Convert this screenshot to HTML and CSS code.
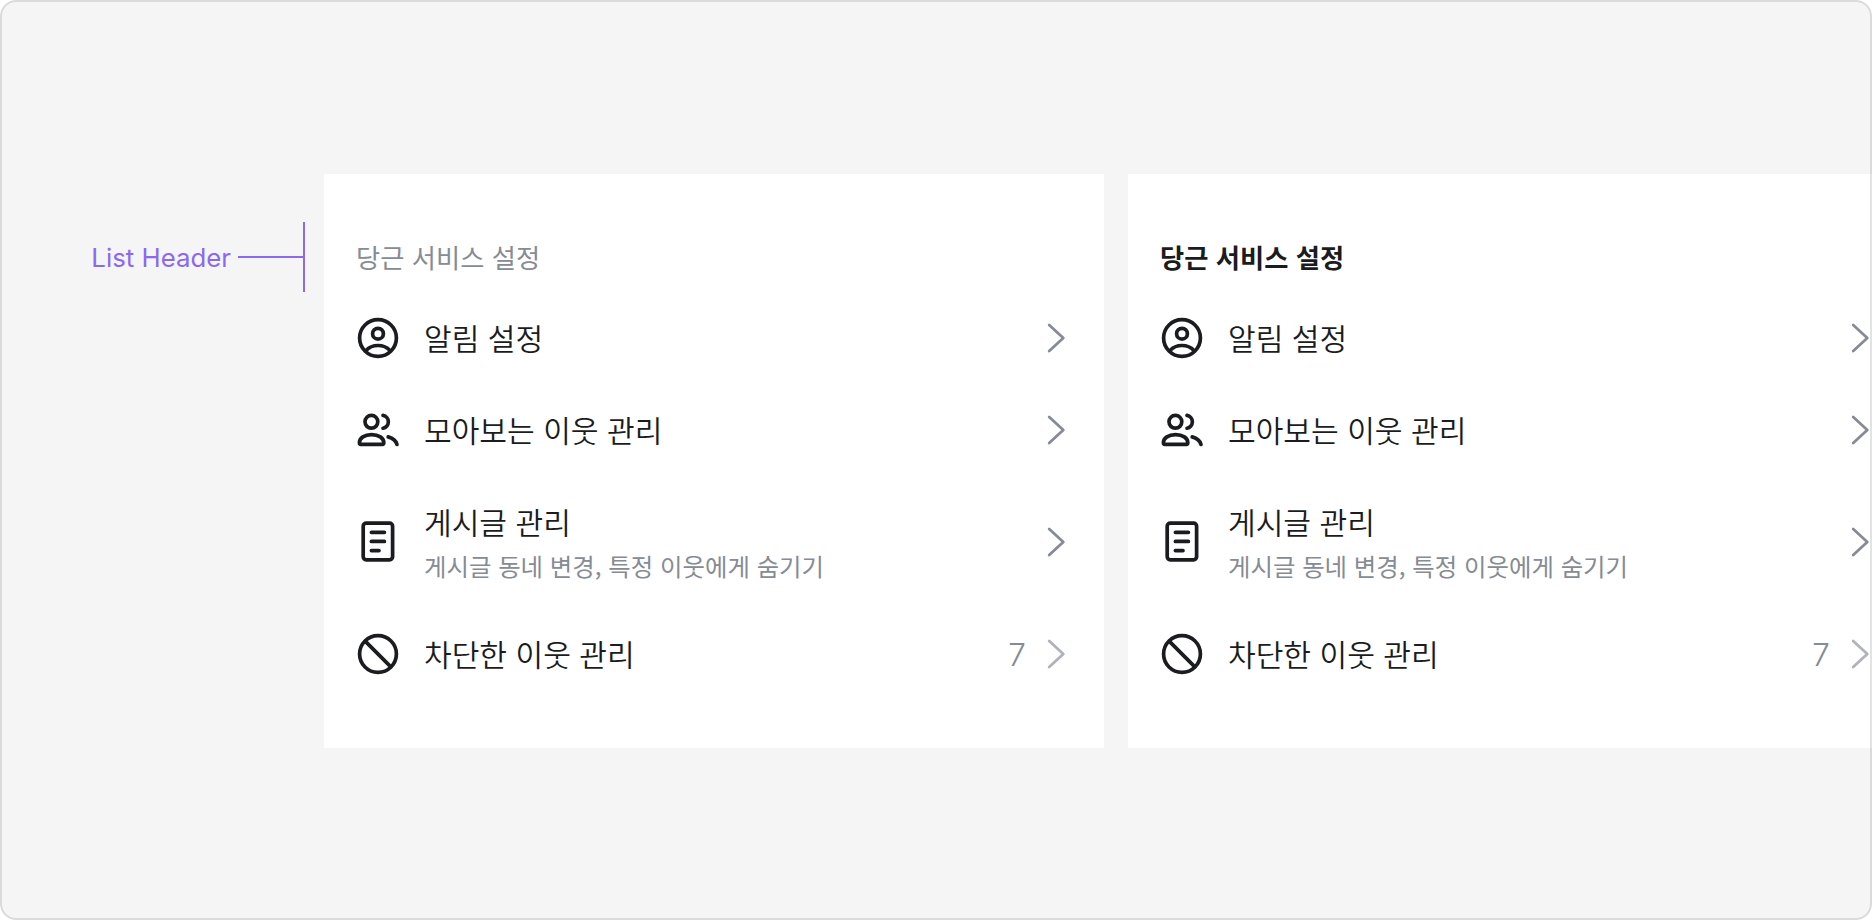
FILE: index.html
```
<!DOCTYPE html>
<html lang="ko">

<head>
  <meta charset="UTF-8">
  <meta name="viewport" content="width=device-width, initial-scale=1.0">
  <title>List Header</title>
  <link rel="stylesheet" href="styles.css">
</head>

<body>

  <!-- shared icons -->
  <svg class="sprite">
    <symbol id="icon-profile" viewBox="0 0 44 44">
      <circle cx="22" cy="22" r="18.4" />
      <circle cx="22" cy="17.7" r="5.4" />
      <path d="M10.2 34.4C13 31.2 17.2 29.5 22 29.5s9 1.7 11.8 4.9" />
    </symbol>
    <symbol id="icon-group" viewBox="0 0 44 44">
      <circle cx="15.4" cy="13.8" r="6.4" />
      <path d="M3.4 34.8C3.4 30 8.6 26.6 15.6 26.6S27.8 30 27.8 34.8q0 1.6-1.4 1.6H4.8q-1.4 0-1.4-1.6z" />
      <path d="M27 7.4a6.5 6.5 0 0 1 0 12.8M32.2 28.9c4.8 1.4 7.8 3.8 8.8 7.5" />
    </symbol>
    <symbol id="icon-article" viewBox="0 0 44 44">
      <rect x="7.2" y="3.2" width="29.4" height="36.6" rx="3" />
      <path d="M15.4 12.3h13M15.4 21.4h13M15.4 30.6h7.6" />
    </symbol>
    <symbol id="icon-block" viewBox="0 0 44 44">
      <circle cx="22" cy="22" r="18.4" />
      <path d="M9.4 9.4l25.2 25.2" />
    </symbol>
    <symbol id="icon-chevron" viewBox="0 0 36 36">
      <path d="M13.2 5L27.3 18 13.2 31" />
    </symbol>
  </svg>

  <div class="frame">
    <div class="annotation">
      <span class="annotation-label">List Header</span>
      <span class="annotation-line"></span>
      <span class="annotation-bar"></span>
    </div>

    <section class="panel">
      <h2 class="list-header">당근 서비스 설정</h2>
      <ul class="list">
        <li class="item">
          <svg class="icon"><use href="#icon-profile" /></svg>
          <div class="content"><p class="title">알림 설정</p></div>
          <svg class="chevron"><use href="#icon-chevron" /></svg>
        </li>
        <li class="item">
          <svg class="icon"><use href="#icon-group" /></svg>
          <div class="content"><p class="title">모아보는 이웃 관리</p></div>
          <svg class="chevron"><use href="#icon-chevron" /></svg>
        </li>
        <li class="item item-tall">
          <svg class="icon"><use href="#icon-article" /></svg>
          <div class="content">
            <p class="title">게시글 관리</p>
            <p class="detail">게시글 동네 변경, 특정 이웃에게 숨기기</p>
          </div>
          <svg class="chevron"><use href="#icon-chevron" /></svg>
        </li>
        <li class="item">
          <svg class="icon"><use href="#icon-block" /></svg>
          <div class="content"><p class="title">차단한 이웃 관리</p></div>
          <span class="count">7</span>
          <svg class="chevron chevron-light"><use href="#icon-chevron" /></svg>
        </li>
      </ul>
    </section>

    <section class="panel">
      <h2 class="list-header list-header-bold">당근 서비스 설정</h2>
      <ul class="list">
        <li class="item">
          <svg class="icon"><use href="#icon-profile" /></svg>
          <div class="content"><p class="title">알림 설정</p></div>
          <svg class="chevron"><use href="#icon-chevron" /></svg>
        </li>
        <li class="item">
          <svg class="icon"><use href="#icon-group" /></svg>
          <div class="content"><p class="title">모아보는 이웃 관리</p></div>
          <svg class="chevron"><use href="#icon-chevron" /></svg>
        </li>
        <li class="item item-tall">
          <svg class="icon"><use href="#icon-article" /></svg>
          <div class="content">
            <p class="title">게시글 관리</p>
            <p class="detail">게시글 동네 변경, 특정 이웃에게 숨기기</p>
          </div>
          <svg class="chevron"><use href="#icon-chevron" /></svg>
        </li>
        <li class="item">
          <svg class="icon"><use href="#icon-block" /></svg>
          <div class="content"><p class="title">차단한 이웃 관리</p></div>
          <span class="count">7</span>
          <svg class="chevron chevron-light"><use href="#icon-chevron" /></svg>
        </li>
      </ul>
    </section>
  </div>

</body>

</html>
```
FILE: styles.css
```
* {
  box-sizing: border-box;
}

body {
  margin: 0;
  background: #fff;
  color: #1a1c20;
  font-family: "Noto Sans CJK KR", sans-serif;
}

h2,
p,
ul {
  margin: 0;
  padding: 0;
}

.sprite {
  display: none;
}

.frame {
  position: relative;
  display: flex;
  align-items: flex-start;
  width: 1872px;
  height: 920px;
  padding-top: 174px;
  background: #f5f5f5;
  border-radius: 16px;
  overflow: hidden;
}

/* outline drawn over the clipped panel */
.frame::after {
  content: "";
  position: absolute;
  inset: 0;
  border: 2px solid rgba(0, 0, 0, 0.11);
  border-radius: 16px;
}

.annotation {
  display: flex;
  align-items: center;
  justify-content: flex-end;
  flex: none;
  width: 305px;
  height: 70px;
  margin: 48px 19px 0 0;
  color: #8b68ee;
}

.annotation-label {
  margin-right: 7px;
  padding-top: 1px;
  font-family: Inter, sans-serif;
  font-size: 25.8px;
  line-height: 36px;
}

.annotation-line {
  width: 65px;
  height: 2px;
  background: #8b68ee;
}

.annotation-bar {
  width: 2px;
  height: 70px;
  background: #8b68ee;
}

.panel {
  flex: none;
  width: 780px;
  height: 574px;
  margin-right: 24px;
  padding: 48px 0;
  background: #fff;
}

.list-header {
  height: 70px;
  padding: 0 32px;
  color: #868b94;
  font-size: 26.3px;
  font-weight: 400;
  line-height: 70px;
}

.list-header-bold {
  color: #1a1c20;
  font-weight: 700;
}

.list {
  list-style: none;
}

.item {
  display: flex;
  align-items: center;
  height: 92px;
  padding: 0 32px;
}

.item-tall {
  height: 132px;
}

.icon {
  flex: none;
  width: 44px;
  height: 44px;
  margin-right: 24px;
  fill: none;
  stroke: #1a1c20;
  stroke-width: 3.7;
  stroke-linecap: round;
  stroke-linejoin: round;
}

.content {
  flex: 1;
}

.title {
  padding-bottom: 2px;
  font-size: 30.1px;
  font-weight: 350;
  line-height: 42px;
}

.detail {
  margin-top: 4px;
  color: #868b94;
  font-size: 24.4px;
  line-height: 36px;
}

.count {
  margin-right: 10px;
  padding-top: 2px;
  color: #868b94;
  font-family: Inter, sans-serif;
  font-size: 31.5px;
  font-weight: 350;
  line-height: 44px;
}

.chevron {
  flex: none;
  width: 36px;
  height: 36px;
  fill: none;
  stroke: #868b94;
  stroke-width: 2.8;
  stroke-linecap: round;
  stroke-linejoin: round;
}

.chevron-light {
  stroke: #b0b3ba;
}
```
